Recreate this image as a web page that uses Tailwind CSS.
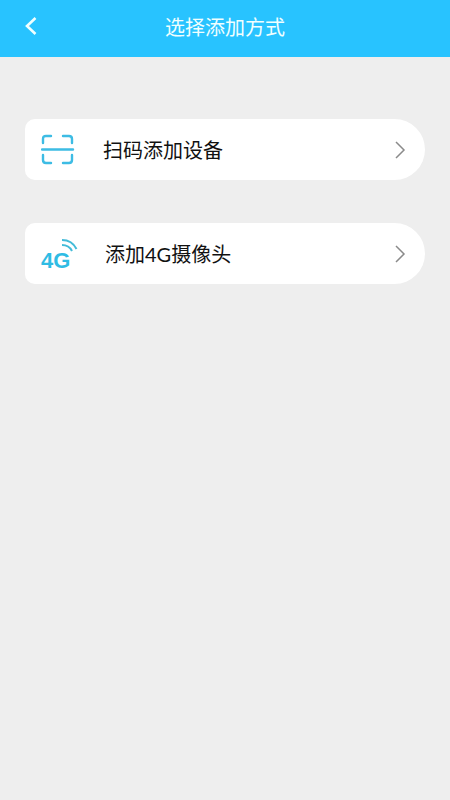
<!DOCTYPE html>
<html lang="zh-CN">
<head>
<meta charset="utf-8">
<meta name="viewport" content="width=device-width, initial-scale=1">
<title>选择添加方式</title>
<script src="https://cdn.jsdelivr.net/npm/@tailwindcss/browser@4"></script>
</head>
<body class="min-h-screen bg-[#eeeeee] font-[Lato,'Noto_Sans_CJK_SC',sans-serif] text-[20px] leading-7">
<header class="grid h-[57px] grid-cols-[64px_1fr_64px] items-center bg-[#28c3ff] pb-[3px] text-white">
  <button type="button" aria-label="返回" class="flex items-center pl-6">
    <svg class="h-5 w-4" viewBox="0 0 16 20" fill="none" stroke="#f0ffff" stroke-width="2.6" aria-hidden="true"><path d="M11.500 1 3 9l8.500 8"/></svg>
  </button>
  <h1 class="text-center font-normal text-[#f0ffff]">选择添加方式</h1>
</header>
<main>
  <nav class="flex flex-col gap-[43px] px-[25px] pt-[62px]">
    <a href="#scan" class="flex h-[61px] items-center rounded-l-[10px] rounded-r-[31px] bg-white pr-[19px] pl-4 text-[#111111]">
      <svg class="h-8 w-[34px]" viewBox="0 0 34 32" fill="none" stroke="#3dbce4" stroke-width="2.400" stroke-linecap="round" aria-hidden="true">
        <path d="M2 9V5q0-3 3-3h5M22 2h6q3 0 3 3v4M2 21v5q0 3 3 3h5M22 29h6q3 0 3-3v-5"/>
        <path d="M1 15.500h31"/>
      </svg>
      <span class="ml-7 flex-1">扫码添加设备</span>
      <svg class="h-5 w-3" viewBox="0 0 12 20" fill="none" stroke="#8a8a8a" stroke-width="1.500" aria-hidden="true"><path d="M2 2l8 8-8 8"/></svg>
    </a>
    <a href="#camera-4g" class="flex h-[61px] items-center rounded-l-[10px] rounded-r-[31px] bg-white pr-[19px] pl-4 text-[#111111]">
      <svg class="h-10 w-9 overflow-visible" viewBox="0 0 36 40" fill="none" stroke="#43bbd8" stroke-width="2" aria-hidden="true">
        <text x="0" y="34" fill="#2fbce4" stroke="none" class="font-['Liberation_Sans',sans-serif] text-[22px] font-bold">4G</text>
        <path d="M21 6Q31 6 35.500 15M21 11Q28 11 31 17"/>
      </svg>
      <span class="ml-7 flex-1">添加4G摄像头</span>
      <svg class="h-5 w-3" viewBox="0 0 12 20" fill="none" stroke="#8a8a8a" stroke-width="1.500" aria-hidden="true"><path d="M2 2l8 8-8 8"/></svg>
    </a>
  </nav>
</main>
</body>
</html>
